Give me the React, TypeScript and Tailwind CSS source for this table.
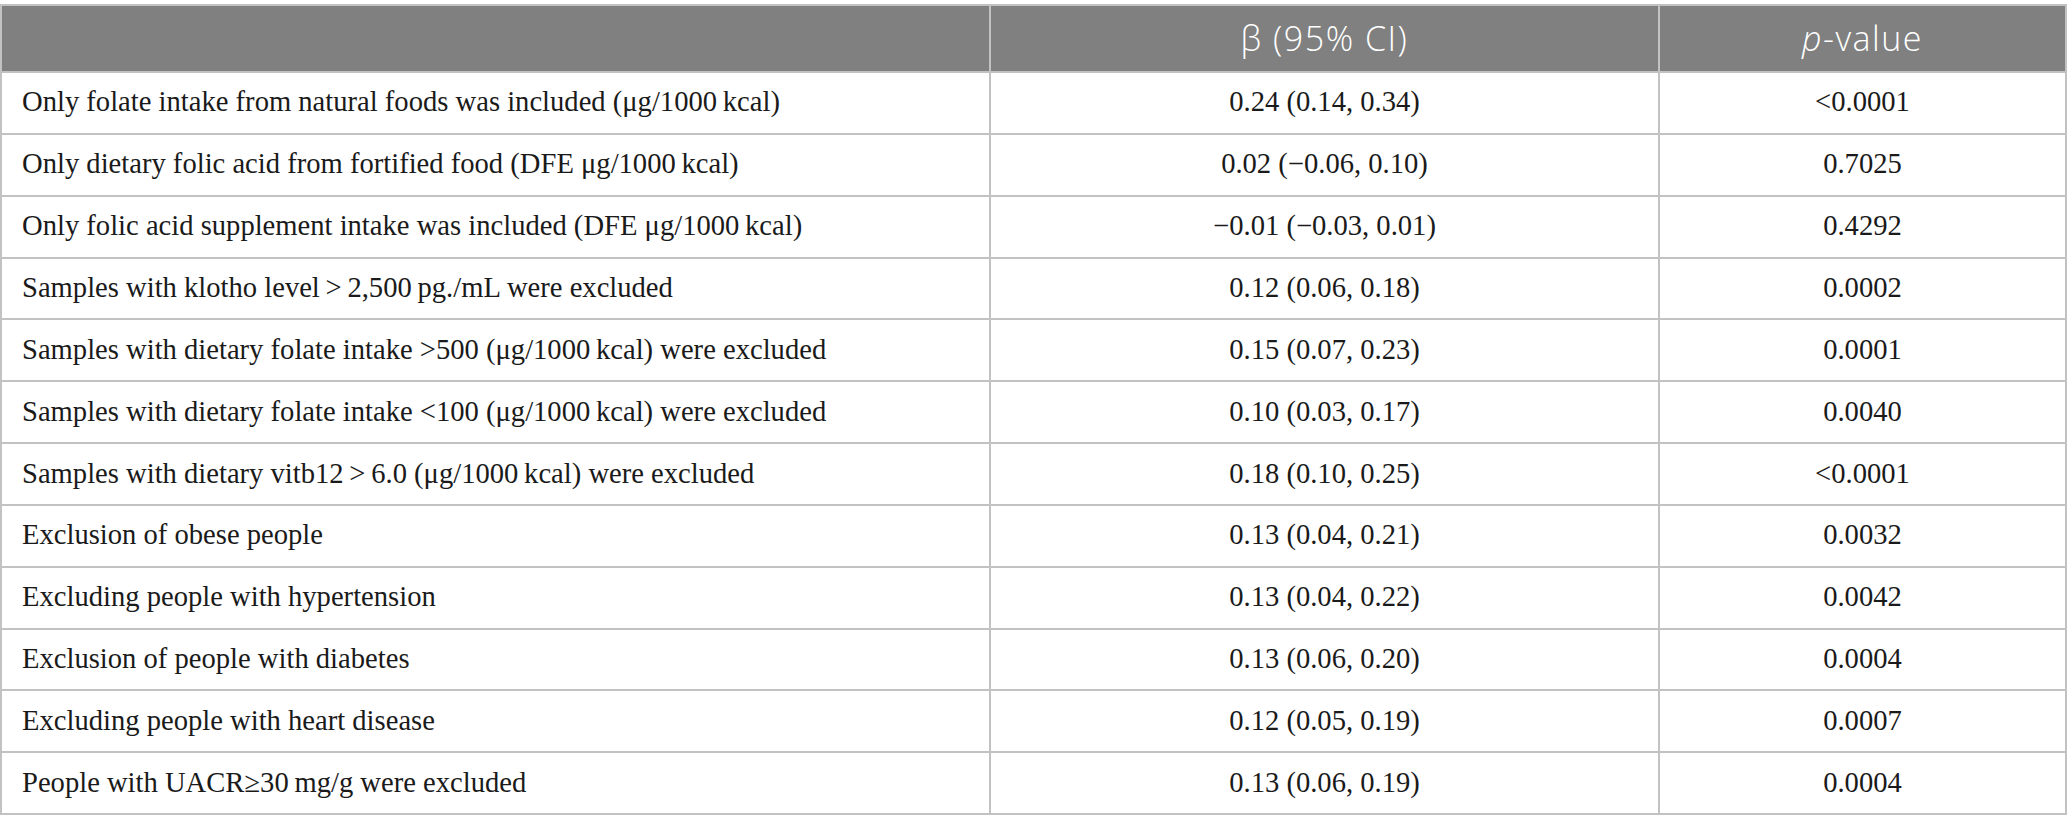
const ROWS: [string, string, string][] = [
  ["Only folate intake from natural foods was included (μg/1000\u2009kcal)", "0.24 (0.14, 0.34)", "<0.0001"],
  ["Only dietary folic acid from fortified food (DFE μg/1000\u2009kcal)", "0.02 (\u22120.06, 0.10)", "0.7025"],
  ["Only folic acid supplement intake was included (DFE μg/1000\u2009kcal)", "\u22120.01 (\u22120.03, 0.01)", "0.4292"],
  ["Samples with klotho level\u2009>\u20092,500\u2009pg./mL were excluded", "0.12 (0.06, 0.18)", "0.0002"],
  ["Samples with dietary folate intake >500 (μg/1000\u2009kcal) were excluded", "0.15 (0.07, 0.23)", "0.0001"],
  ["Samples with dietary folate intake <100 (μg/1000\u2009kcal) were excluded", "0.10 (0.03, 0.17)", "0.0040"],
  ["Samples with dietary vitb12\u2009>\u20096.0 (μg/1000\u2009kcal) were excluded", "0.18 (0.10, 0.25)", "<0.0001"],
  ["Exclusion of obese people", "0.13 (0.04, 0.21)", "0.0032"],
  ["Excluding people with hypertension", "0.13 (0.04, 0.22)", "0.0042"],
  ["Exclusion of people with diabetes", "0.13 (0.06, 0.20)", "0.0004"],
  ["Excluding people with heart disease", "0.12 (0.05, 0.19)", "0.0007"],
  ["People with UACR\u226530\u2009mg/g were excluded", "0.13 (0.06, 0.19)", "0.0004"],
];

export default function App() {
  return (
    <div className="w-[2067px] h-[832px] bg-white pt-1">
      <table className="w-[2067px] table-fixed border-collapse">
        <colgroup>
          <col className="w-[989px]" />
          <col className="w-[669px]" />
          <col />
        </colgroup>
        <thead>
          <tr className="h-[67px] bg-[#7f807f] text-white font-['Open_Sans',sans-serif] text-[34px] tracking-[1.5px]">
            <th className="border-2 border-[#c2c2c2]"></th>
            <th className="border-2 border-[#c2c2c2] font-light text-center">β (95% CI)</th>
            <th className="border-2 border-[#c2c2c2] font-light text-center">
              <i>p</i>-value
            </th>
          </tr>
        </thead>
        <tbody className="font-['Liberation_Serif',serif] text-[28.6px] text-[#1a1a1a]">
          {ROWS.map((r, i) => (
            <tr key={i} className="h-[61.85px]">
              <td className="border-2 border-[#c2c2c2] pl-5 text-left">{r[0]}</td>
              <td className="border-2 border-[#c2c2c2] text-center">{r[1]}</td>
              <td className="border-2 border-[#c2c2c2] text-center">{r[2]}</td>
            </tr>
          ))}
        </tbody>
      </table>
    </div>
  );
}
